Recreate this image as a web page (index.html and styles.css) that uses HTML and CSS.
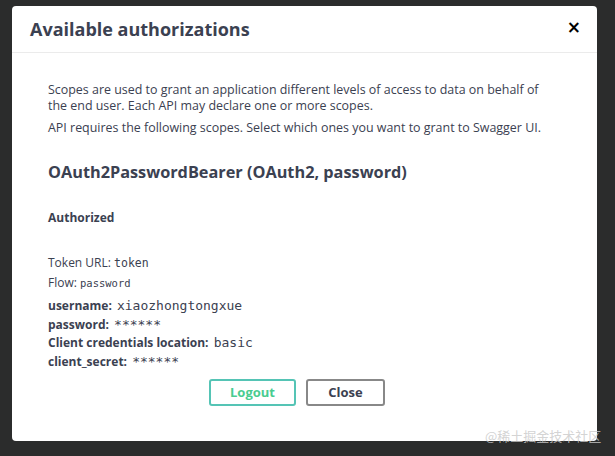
FILE: index.html
```html
<!DOCTYPE html>
<html>
<head>
<meta charset="utf-8">
<link rel="stylesheet" href="styles.css">
</head>
<body>
<div class="modal">
  <div class="modal-header">
    <h3 class="modal-title">Available authorizations</h3>
    <span class="modal-close">×</span>
  </div>
  <div class="modal-body">
    <p class="scopes-desc">Scopes are used to grant an application different levels of access to data on behalf of the end user. Each API may declare one or more scopes.</p>
    <p class="scopes-req">API requires the following scopes. Select which ones you want to grant to Swagger UI.</p>
    <h4 class="auth-name">OAuth2PasswordBearer (OAuth2, password)</h4>
    <h6 class="auth-status">Authorized</h6>
    <p class="meta meta-first">Token URL: <code>token</code></p>
    <p class="meta">Flow: <code class="small">password</code></p>
    <div class="fields">
      <div class="field"><b>username:</b> <code>xiaozhongtongxue</code></div>
      <div class="field"><b>password:</b> <code>******</code></div>
      <div class="field"><b>Client credentials location:</b> <code>basic</code></div>
      <div class="field"><b>client_secret:</b> <code>******</code></div>
    </div>
    <div class="btn-row">
      <button class="btn btn-logout">Logout</button>
      <button class="btn btn-close">Close</button>
    </div>
  </div>
</div>
<div class="watermark">@稀土掘金技术社区</div>
</body>
</html>
```
FILE: styles.css
```css
html, body {
  margin: 0;
  padding: 0;
}
body {
  background: #2b2c2c;
  width: 615px;
  height: 456px;
  overflow: hidden;
  font-family: "Open Sans", "Noto Sans CJK SC", sans-serif;
  color: #3b4151;
  padding-top: 6px;
  box-sizing: border-box;
}
.modal {
  margin-left: 12px;
  width: 585px;
  height: 435px;
  background: #fff;
  border-radius: 4px;
  box-sizing: border-box;
}
.modal-header {
  display: flex;
  align-items: center;
  justify-content: space-between;
  height: 46px;
  padding: 0 14px 0 18px;
  border-bottom: 1px solid #ebebeb;
}
.modal-title {
  margin: 0;
  font-size: 18px;
  font-weight: 700;
  color: #3b4151;
}
.modal-close {
  font-family: "DejaVu Sans", sans-serif;
  font-size: 17px;
  font-weight: 700;
  color: #000;
  line-height: 1;
  margin-right: 2px;
  margin-top: -4px;
}
.modal-body {
  padding: 29px 49px 0 36px;
}
p {
  margin: 0;
}
.scopes-desc {
  font-size: 12.45px;
  line-height: 16px;
}
.scopes-req {
  font-size: 12.45px;
  line-height: 16px;
  margin-top: 6px;
}
.auth-name {
  margin: 26px 0 0;
  font-size: 16.3px;
  font-weight: 700;
  line-height: 20px;
}
.auth-status {
  margin: 28px 0 0;
  font-size: 12px;
  font-weight: 700;
  line-height: 16px;
}
.meta {
  font-size: 12px;
  line-height: 16px;
}
.meta-first {
  margin-top: 29px;
}
.meta + .meta {
  margin-top: 4px;
}
code {
  font-family: "DejaVu Sans Mono", monospace;
  font-size: 11.5px;
}
code.small {
  font-size: 10.5px;
}
.fields {
  margin-top: 6px;
}
.field {
  font-size: 12px;
  line-height: 18.7px;
}
.field b {
  font-weight: 700;
}
.field code {
  font-size: 13px;
  margin-left: 2px;
  color: #3b4151;
}
.btn-row {
  display: flex;
  gap: 10px;
  padding-left: 161px;
  margin-top: 7px;
}
.btn {
  height: 27px;
  border-radius: 3px;
  background: #fff;
  font-family: "Open Sans", sans-serif;
  font-size: 13px;
  font-weight: 700;
  padding: 0;
  box-sizing: border-box;
}
.btn-logout {
  width: 87px;
  border: 2px solid #55c4b5;
  color: #49cc90;
}
.btn-close {
  width: 79px;
  border: 2px solid #888;
  color: #3b4151;
}
.watermark {
  position: absolute;
  left: 485px;
  top: 426px;
  font-size: 13px;
  color: rgba(200, 200, 200, 0.8);
  font-family: "Noto Sans CJK SC", sans-serif;
}
```
